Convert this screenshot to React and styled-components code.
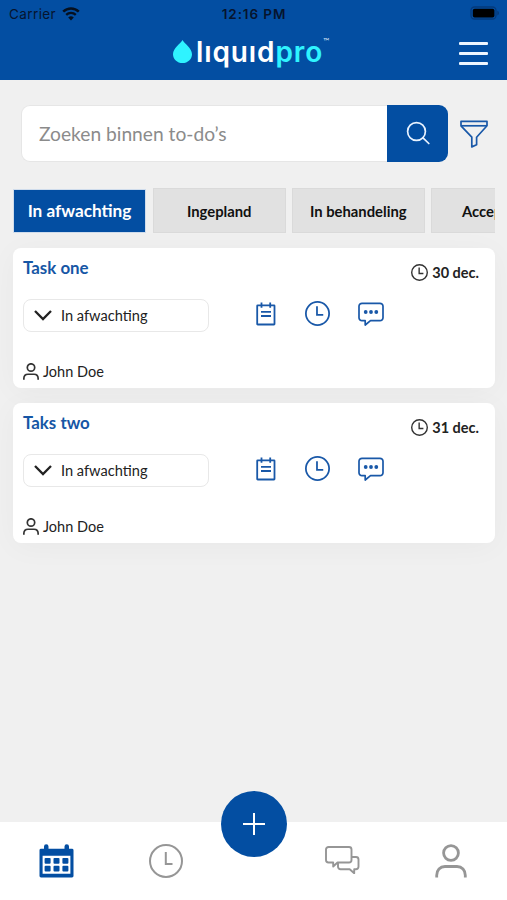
import React from "react";
import styled, { createGlobalStyle } from "styled-components";

const GlobalStyle = createGlobalStyle`
  * {
    box-sizing: border-box;
  }
  body {
    margin: 0;
    background: #f0f0f0;
    font-family: Lato, "Liberation Sans", sans-serif;
  }
  button {
    padding: 0;
    border: 0;
    background: none;
    font-family: inherit;
  }
  svg {
    display: block;
    flex-shrink: 0;
  }
`;

const Screen = styled.div`
  display: flex;
  flex-direction: column;
  height: 900px;
  overflow: hidden;
`;

const Header = styled.header`
  height: 80px;
  background: #034ea2;
`;

const StatusBar = styled.div`
  display: grid;
  grid-template-columns: 1fr auto 1fr;
  align-items: center;
  height: 27px;
  padding: 0 8px 0 9px;
  font-family: Inter, "Liberation Sans", sans-serif;
  font-size: 13.5px;
  color: #06142e;
`;

const Carrier = styled.div`
  display: flex;
  align-items: center;
  gap: 6px;
  letter-spacing: 0.4px;
`;

const Time = styled.div`
  font-weight: 600;
  letter-spacing: 0.9px;
`;

const Battery = styled.div`
  justify-self: end;
`;

const TopBar = styled.div`
  display: flex;
  align-items: center;
  justify-content: space-between;
  height: 53px;
  padding: 0 19px 0 173px;
`;

const Brand = styled.div`
  display: flex;
  align-items: center;
  height: 53px;
  padding-bottom: 4px;
`;

const BrandName = styled.div`
  margin-left: 4px;
  font-family: Inter, "Liberation Sans", sans-serif;
  font-weight: 600;
  font-size: 28px;
  line-height: 34px;
  letter-spacing: 0.9px;
  color: #fff;
  white-space: nowrap;
  & span {
    color: #2ff3ff;
  }
`;

const Trademark = styled.div`
  align-self: flex-start;
  margin-top: 10px;
  font-size: 8px;
  line-height: 8px;
  color: #cfe0f5;
`;

const MenuButton = styled.button`
  display: flex;
  flex-direction: column;
  gap: 7px;
  width: 29px;
`;

const MenuLine = styled.span`
  height: 3px;
  border-radius: 1px;
  background: #eef6ff;
`;

const Main = styled.main`
  flex: 1;
  padding: 25px 12px 0 13px;
`;

const SearchRow = styled.div`
  display: flex;
  align-items: center;
  height: 57px;
  padding-left: 8px;
`;

const SearchInput = styled.input`
  width: 366px;
  height: 57px;
  padding: 0 0 0 17px;
  border: 1px solid #e6e6e6;
  border-right: 0;
  border-radius: 9px 0 0 9px;
  outline: 0;
  background: #fff;
  font-family: inherit;
  font-size: 19.2px;
  &::placeholder {
    color: #8b8b8b;
    opacity: 1;
  }
`;

const SearchButton = styled.button`
  display: flex;
  align-items: center;
  justify-content: center;
  width: 61px;
  height: 57px;
  padding-bottom: 2px;
  border-radius: 0 9px 9px 0;
  background: #034ea2;
`;

const FilterButton = styled.button`
  margin-left: 12px;
`;

const Tabs = styled.div`
  display: flex;
  align-items: center;
  gap: 5.5px;
  height: 45px;
  margin-top: 26px;
  overflow: hidden;
`;

const Tab = styled.button`
  flex: 0 0 auto;
  width: 133.5px;
  height: 45px;
  border: 1px solid #dadada;
  background: #e1e1e1;
  font-weight: 700;
  font-size: 14.8px;
  color: #111;
  ${({ $active }) =>
    $active &&
    `
    width: 133px;
    height: 44px;
    margin-right: 1px;
    border-color: #cfdcec;
    background: #034ea2;
    font-size: 17.2px;
    color: #fff;
  `}
`;

const List = styled.div`
  display: flex;
  flex-direction: column;
  gap: 15px;
  margin-top: 15px;
`;

const Card = styled.article`
  height: 140px;
  padding: 9px 16px 0 10px;
  border-radius: 8px;
  background: #fff;
  box-shadow: 0 4px 30px rgba(0, 0, 0, 0.035);
`;

const CardTop = styled.div`
  display: flex;
  justify-content: space-between;
  height: 42px;
`;

const Title = styled.h2`
  margin: 0;
  font-weight: 700;
  font-size: 16.9px;
  line-height: 21px;
  color: #1656a5;
`;

const DueDate = styled.div`
  display: flex;
  align-items: center;
  gap: 4px;
  height: 18px;
  margin-top: 6px;
  font-weight: 700;
  font-size: 14.5px;
  color: #222;
`;

const CardActions = styled.div`
  display: flex;
  align-items: center;
  height: 33px;
`;

const Status = styled.button`
  display: flex;
  align-items: center;
  gap: 9px;
  width: 186px;
  height: 33px;
  margin-right: 47px;
  padding: 0 0 1px 10px;
  border: 1px solid #e8e8e8;
  border-radius: 8px;
  background: #fff;
  font-size: 14.6px;
  color: #222;
`;

const IconGroup = styled.div`
  display: flex;
  align-items: center;
  gap: 28.5px;
  padding-bottom: 4px;
`;

const Assignee = styled.div`
  display: flex;
  align-items: center;
  gap: 4px;
  height: 20px;
  margin-top: 29px;
  font-size: 14.5px;
  color: #222;
`;

const BottomNav = styled.nav`
  position: relative;
  display: flex;
  justify-content: space-between;
  height: 78px;
  padding: 22px 40px 0 38.500px;
  background: #fff;
`;

const NavGroup = styled.div`
  display: flex;
  align-items: flex-start;
  gap: 75.5px;
`;

const AddButton = styled.button`
  position: absolute;
  top: -31px;
  left: 50%;
  display: flex;
  align-items: center;
  justify-content: center;
  width: 66px;
  height: 66px;
  border-radius: 50%;
  background: #034ea2;
  transform: translateX(-50%);
`;

const WifiIcon = () => (
  <svg width="18" height="14" viewBox="0 0 18 14" fill="none" stroke="#06101f">
    <path d="M1.2 4.7a11.2 11.2 0 0 1 15.6 0" strokeWidth="2.5" />
    <path d="M4.2 7.8a6.9 6.9 0 0 1 9.6 0" strokeWidth="2.3" />
    <path d="M9 13.5 6.2 10.6a4 4 0 0 1 5.6 0Z" fill="#06101f" stroke="none" />
  </svg>
);

const BatteryIcon = () => (
  <svg width="29" height="15" viewBox="0 0 29 15">
    <rect x="1" y="1" width="25" height="12" rx="3.5" fill="none" stroke="#053a7b" strokeWidth="1.3" />
    <rect x="2.8" y="2.7" width="21.6" height="8.8" rx="1.8" fill="#000" />
    <path d="M27.3 4.8v4.6c1.1-.4 1.7-1.2 1.7-2.3s-.6-1.9-1.7-2.3Z" fill="#053a7b" />
  </svg>
);

const DropIcon = () => (
  <svg width="19" height="23" viewBox="0 0 19 23">
    <path d="M9.5 0C11.6 3.6 19 8.4 19 14.2 19 19.2 14.8 23 9.5 23S0 19.2 0 14.2C0 8.4 7.4 3.6 9.5 0Z" fill="#2ff3ff" />
  </svg>
);

const SearchIcon = () => (
  <svg width="24" height="24" viewBox="0 0 24 24" fill="none" stroke="#e8f2ff" strokeWidth="1.7" strokeLinecap="round">
    <circle cx="10.5" cy="10.5" r="8.9" />
    <path d="m17 16.8 5.8 5.7" />
  </svg>
);

const FilterIcon = () => (
  <svg width="28" height="28" viewBox="0 0 28 28" fill="none" stroke="#1958a8" strokeWidth="1.7" strokeLinejoin="round">
    <path d="M1 1.4h26v4.4L16.6 17.2v7.6l-4.8 2.1v-9.7L1 5.8Z" />
    <path d="M1 5.8h26" />
  </svg>
);

const ChevronIcon = () => (
  <svg width="18" height="12" viewBox="0 0 18 12" fill="none" stroke="#222" strokeWidth="2.3">
    <path d="m1 2 8 8 8-8" />
  </svg>
);

const ClockIcon = ({ size, color, stroke, hands = "M16.3 7v12h8.5" }) => (
  <svg width={size} height={size} viewBox="0 0 34 34" fill="none" stroke={color} strokeWidth={stroke}>
    <circle cx="17" cy="17" r={17 - stroke / 2} />
    <path d={hands} />
  </svg>
);

const NoteIcon = () => (
  <svg width="20" height="24" viewBox="0 0 20 24" fill="none" stroke="#1958a8" strokeWidth="1.8">
    <rect x="1.2" y="3.3" width="17.3" height="19.2" rx="0.5" />
    <path d="M5.5.5v5.3M14.2.5v5.3M5 9.8h10M5 14h10" />
  </svg>
);

const MessageIcon = () => (
  <svg width="26" height="26" viewBox="0 0 26 26" fill="none" stroke="#1958a8" strokeWidth="1.7" strokeLinejoin="round">
    <path d="M4 2.3h18a3 3 0 0 1 3 3v11.4a3 3 0 0 1-3 3H12.5L7.2 24v-4.3H4a3 3 0 0 1-3-3V5.3a3 3 0 0 1 3-3Z" />
    <g fill="#1958a8" stroke="none">
      <circle cx="7.7" cy="11" r="1.9" />
      <circle cx="13" cy="11" r="1.9" />
      <circle cx="18.3" cy="11" r="1.9" />
    </g>
  </svg>
);

const PersonIcon = ({ width, height, color, stroke }) => (
  <svg width={width} height={height} viewBox="0 0 32 34" fill="none" stroke={color} strokeWidth={stroke}>
    <circle cx="16" cy="9" r="7.4" />
    <path d="M1.7 33.5v-2.3c0-5 3.3-8.700 8.3-8.700h12c5 0 8.300 3.700 8.300 8.700v2.300" />
  </svg>
);

const CalendarIcon = () => (
  <svg width="35" height="34" viewBox="0 0 35 35" preserveAspectRatio="none" fill="#034ea2">
    <path fillRule="evenodd" d="M2 5h3V2.5a2 2 0 0 1 4.500 0V5h16V2.500a2 2 0 0 1 4.500 0V5h3a1.500 1.500 0 0 1 1.500 1.500V33a1.500 1.500 0 0 1-1.500 1.500H2A1.500 1.500 0 0 1 .500 33V6.500A1.500 1.500 0 0 1 2 5Zm1.600 7v18.500h27.800V12Z" />
    {[5.6, 14.5, 23.4].map((x) => (
      <g key={x}>
        <rect x={x} y="14.3" width="6" height="6" rx="1" />
        <rect x={x} y="22.3" width="6" height="6" rx="1" />
      </g>
    ))}
  </svg>
);

const ChatsIcon = () => (
  <svg width="35" height="30" viewBox="0 0 35 30" fill="none" stroke="#969696" strokeWidth="1.9" strokeLinejoin="round">
    <path d="M3.500 3H24a2.500 2.500 0 0 1 2.500 2.500V16a2.500 2.500 0 0 1-2.500 2.500H12.500L8.200 22.500v-4H3.500A2.500 2.500 0 0 1 1 16V5.500A2.500 2.500 0 0 1 3.500 3Z" />
    <path d="M26.500 13H31a2.500 2.500 0 0 1 2.500 2.500v7.200a2.500 2.500 0 0 1-2.500 2.500h-1.800v4l-4.500-4h-9.200a2.500 2.500 0 0 1-2.500-2.500v-4.200" />
  </svg>
);

const PlusIcon = () => (
  <svg width="22" height="22" viewBox="0 0 22 22" stroke="#fff" strokeWidth="2">
    <path d="M11 0v22M0 11h22" />
  </svg>
);

const tabs = ["In afwachting", "Ingepland", "In behandeling", "Acceptatie"];

const tasks = [
  { title: "Task one", date: "30 dec.", status: "In afwachting", user: "John Doe" },
  { title: "Taks two", date: "31 dec.", status: "In afwachting", user: "John Doe" },
];

const TaskCard = ({ title, date, status, user }) => (
  <Card>
    <CardTop>
      <Title>{title}</Title>
      <DueDate>
        <ClockIcon size={17} color="#333" stroke={2.8} />
        {date}
      </DueDate>
    </CardTop>
    <CardActions>
      <Status>
        <ChevronIcon />
        {status}
      </Status>
      <IconGroup>
        <NoteIcon />
        <ClockIcon size={25} color="#1958a8" stroke={2.4} />
        <MessageIcon />
      </IconGroup>
    </CardActions>
    <Assignee>
      <PersonIcon width={16} height={17} color="#333" stroke={3.4} />
      {user}
    </Assignee>
  </Card>
);

const App = () => {
  return (
    <Screen>
      <GlobalStyle />
      <Header>
        <StatusBar>
          <Carrier>
            Carrier
            <WifiIcon />
          </Carrier>
          <Time>12:16 PM</Time>
          <Battery>
            <BatteryIcon />
          </Battery>
        </StatusBar>
        <TopBar>
          <Brand>
            <DropIcon />
            <BrandName>
              lıquıd<span>pro</span>
            </BrandName>
            <Trademark>™</Trademark>
          </Brand>
          <MenuButton aria-label="Menu">
            <MenuLine />
            <MenuLine />
            <MenuLine />
          </MenuButton>
        </TopBar>
      </Header>
      <Main>
        <SearchRow>
          <SearchInput placeholder="Zoeken binnen to-do’s" />
          <SearchButton aria-label="Zoeken">
            <SearchIcon />
          </SearchButton>
          <FilterButton aria-label="Filter">
            <FilterIcon />
          </FilterButton>
        </SearchRow>
        <Tabs>
          {tabs.map((tab, i) => (
            <Tab key={tab} $active={i === 0}>
              {tab}
            </Tab>
          ))}
        </Tabs>
        <List>
          {tasks.map((task) => (
            <TaskCard key={task.title} {...task} />
          ))}
        </List>
      </Main>
      <BottomNav>
        <NavGroup>
          <CalendarIcon />
          <ClockIcon size={34} color="#969696" stroke={2} hands="M16.8 8v12h6.7" />
        </NavGroup>
        <AddButton aria-label="Toevoegen">
          <PlusIcon />
        </AddButton>
        <NavGroup>
          <ChatsIcon />
          <PersonIcon width={32} height={34} color="#969696" stroke={2.8} />
        </NavGroup>
      </BottomNav>
    </Screen>
  );
};

export default App;
